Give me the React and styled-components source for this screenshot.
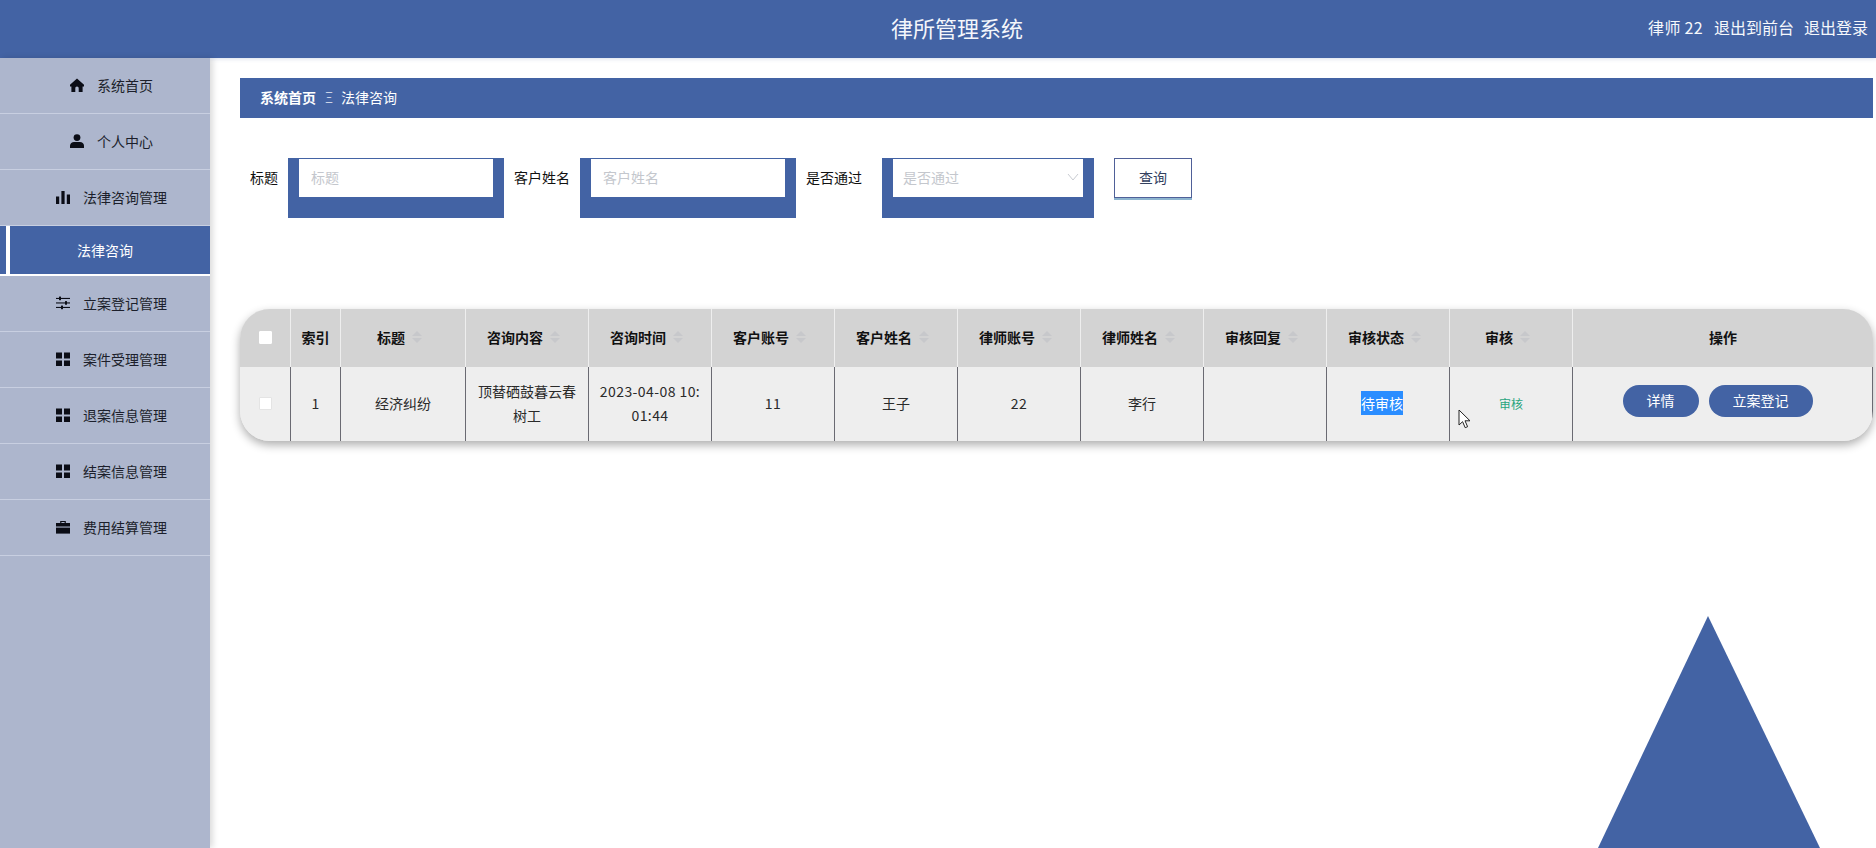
import React from "react";
import styled, { createGlobalStyle } from "styled-components";

const BLUE = "#4363a4";

const Global = createGlobalStyle`
  html, body { margin: 0; padding: 0; background: #fff; }
  body { font-family: "Noto Sans CJK SC", "Open Sans", "Liberation Sans", sans-serif; font-size: 14px; color: #222; }
  * { box-sizing: border-box; }
`;

const Page = styled.div`
  position: relative;
  width: 1876px;
  height: 848px;
  overflow: hidden;
  display: flex;
  flex-direction: column;
`;

const TopBar = styled.header`
  flex: 0 0 58px;
  display: grid;
  grid-template-columns: 1fr auto 1fr;
  align-items: center;
  padding: 0 8px 4px 46px;
  background: ${BLUE};
  color: #fff;
  box-shadow: 0 1px 4px rgba(67, 99, 164, 0.2);
`;

const Title = styled.h1`
  grid-column: 2;
  margin: 0;
  font-size: 22px;
  font-weight: 400;
  line-height: 32px;
  color: #f4f6fb;
`;

const UserLinks = styled.div`
  grid-column: 3;
  justify-self: end;
  display: flex;
  gap: 10px;
  font-size: 16px;
  color: #f6f8fc;
`;

const UserName = styled.span`
  margin-right: 1px;
  letter-spacing: 0.3px;
`;

const Body = styled.div`
  flex: 1;
  display: flex;
  min-height: 0;
`;

const Sidebar = styled.nav`
  flex: 0 0 210px;
  background: #adb6cd;
  box-shadow: 3px 0 6px rgba(0, 0, 0, 0.14);
`;

const NavItem = styled.div`
  height: 56px;
  display: flex;
  align-items: center;
  justify-content: center;
  gap: 13px;
  padding: 0 0 2px 13px;
  border-bottom: 1px solid #c8cfe1;
  color: #1c1f2b;
  svg { width: 14px; height: 14px; fill: #0b0d16; flex: none; }
`;

const ActiveItem = styled.div`
  position: relative;
  height: 50px;
  display: flex;
  align-items: center;
  justify-content: center;
  background: ${BLUE};
  border-bottom: 2px solid #fff;
  color: #fff;
  &::before {
    content: "";
    position: absolute;
    left: 6px;
    top: 0;
    bottom: 0;
    width: 4px;
    background: #fff;
  }
`;

const Main = styled.main`
  flex: 1;
  min-width: 0;
  padding: 20px 3px 0 30px;
`;

const Crumbs = styled.div`
  height: 40px;
  display: flex;
  align-items: center;
  padding: 0 0 2px 20px;
  background: ${BLUE};
  color: #fff;
`;

const CrumbHome = styled.span`
  font-weight: 700;
`;

const CrumbSep = styled.span`
  margin: 0 8px 0 9px;
  font-weight: 300;
  color: #e6eaf4;
`;

const SearchForm = styled.form`
  display: flex;
  align-items: flex-start;
  margin-top: 40px;
  padding-left: 10px;
`;

const FieldLabel = styled.label`
  line-height: 38px;
  color: #111;
  margin-right: ${(p) => p.$gap || 10}px;
`;

const FieldBox = styled.div`
  position: relative;
  width: ${(p) => p.$width}px;
  height: 60px;
  padding: 1px 11px 21px;
  margin-right: 10px;
  background: ${BLUE};
`;

const TextInput = styled.input`
  display: block;
  width: 100%;
  height: 38px;
  padding: 0 12px 2px;
  border: 0;
  outline: 0;
  background: #fff;
  font: inherit;
  &::placeholder { color: #c4c7cd; opacity: 1; }
`;

const SelectInput = styled.select`
  display: block;
  width: 100%;
  height: 38px;
  padding: 0 10px 2px;
  border: 0;
  outline: 0;
  border-radius: 0;
  appearance: none;
  background: #fff;
  color: #c4c7cd;
  font: inherit;
`;

const Chevron = styled.svg`
  position: absolute;
  right: 15px;
  top: 15px;
  width: 12px;
  height: 8px;
  fill: none;
  stroke: #c9ccd2;
  stroke-width: 1;
`;

const QueryButton = styled.button`
  width: 78px;
  height: 40px;
  margin-left: 10px;
  background: #fff;
  border: 1px solid #4f6098;
  box-shadow: 0 2px 0 #8db4cf;
  color: #33415f;
  font: inherit;
  padding: 0 0 2px;
`;

const TableCard = styled.div`
  margin-top: 91px;
  border-radius: 30px;
  overflow: hidden;
  background: #eee;
  box-shadow: 0 4px 10px rgba(0, 0, 0, 0.32);
`;

const Table = styled.table`
  width: 100%;
  table-layout: fixed;
  border-collapse: separate;
  border-spacing: 0;
`;

const HeadCell = styled.th`
  height: 58px;
  padding: 0 10px 2px;
  background: #d3d3d3;
  border-right: 1px solid #eeeeee;
  color: #111;
  font-size: 14px;
  font-weight: 700;
  text-align: center;
  &:last-child { border-right: 0; }
`;

const HeadInner = styled.span`
  display: inline-flex;
  align-items: center;
  justify-content: center;
`;

const SortCaret = styled.span`
  position: relative;
  display: inline-block;
  width: 24px;
  height: 16px;
  flex: none;
  &::before, &::after {
    content: "";
    position: absolute;
    left: 7px;
    border: 5px solid transparent;
  }
  &::before { top: -3px; border-bottom-color: #c7c8cb; }
  &::after { bottom: -3px; border-top-color: #c7c8cb; }
`;

const Cell = styled.td`
  height: 74px;
  padding: 0 10px 2px;
  background: #eee;
  border-right: 1px solid #6a6a72;
  color: #2a2a2a;
  font-size: 14px;
  line-height: 24px;
  text-align: center;
  word-break: break-all;
`;

const NumberText = styled.span`
  letter-spacing: 0.42px;
`;

const CheckBox = styled.input.attrs({ type: "checkbox" })`
  display: block;
  appearance: none;
  width: 13px;
  height: 13px;
  margin: 0 auto;
  background: #fff;
  border: 1px solid ${(p) => (p.$head ? "#fff" : "#e4e4e4")};
  border-radius: 1px;
`;

const Highlight = styled.span`
  display: inline-block;
  margin-right: 12px;
  line-height: 24px;
  background: #2a8dff;
  color: #fff;
  word-break: keep-all;
`;

const ReviewLink = styled.span`
  font-size: 12px;
  color: #2aa57f;
`;

const ActionRow = styled.div`
  display: flex;
  justify-content: center;
  gap: 10px;
  padding: 0 10px 4px 0;
`;

const PillButton = styled.button`
  height: 32px;
  width: ${(p) => p.$width}px;
  padding: 0 0 2px;
  border: 0;
  border-radius: 16px;
  background: ${BLUE};
  color: #fff;
  font: inherit;
  font-size: 14px;
`;

const Pointer = styled.svg`
  position: absolute;
  left: 1458px;
  top: 409px;
  width: 13px;
  height: 20px;
`;

const Triangle = styled.svg`
  position: absolute;
  left: 1598px;
  top: 616px;
  width: 222px;
  height: 232px;
  fill: ${BLUE};
`;

const icons = {
  home: <path d="M7 .6 0 6.8V8.4h1.4V14h3.9V10.4C5.3 9.3 6 8.6 7 8.6s1.7.7 1.7 1.8V14h3.9V8.4H14V6.8z" />,
  user: (
    <>
      <circle cx="7" cy="3.6" r="3.4" />
      <path d="M0 14v-2.4C0 9.6 2 8 4 8h6c2 0 4 1.6 4 3.6V14z" />
    </>
  ),
  chart: (
    <>
      <rect x="0" y="6.5" width="3.2" height="7.5" />
      <rect x="5.4" y="1" width="3.2" height="13" />
      <rect x="10.8" y="4.5" width="3.2" height="9.5" />
    </>
  ),
  sliders: (
    <>
      <rect x="0" y="1.9" width="14" height="1.1" />
      <rect x="0" y="6.4" width="14" height="1.1" />
      <rect x="0" y="10.9" width="14" height="1.1" />
      <rect x="3" y="0.6" width="2" height="3.6" />
      <rect x="9" y="5.1" width="2" height="3.6" />
      <rect x="5" y="9.6" width="2" height="3.6" />
    </>
  ),
  grid: (
    <>
      <rect x="0" y="0.5" width="6" height="6" />
      <rect x="8" y="0.5" width="6" height="6" />
      <rect x="0" y="8.5" width="6" height="6" />
      <rect x="8" y="8.5" width="6" height="6" />
    </>
  ),
  case: (
    <>
      <path d="M4.2 3V1h5.6v2H14v3.6H0V3zM5.4 3h3.2V2.1H5.4z" fillRule="evenodd" />
      <rect x="0" y="7.6" width="14" height="6" />
    </>
  ),
};

const navTop = [
  { icon: "home", label: "系统首页" },
  { icon: "user", label: "个人中心" },
  { icon: "chart", label: "法律咨询管理" },
];
const navBottom = [
  { icon: "sliders", label: "立案登记管理" },
  { icon: "grid", label: "案件受理管理" },
  { icon: "grid", label: "退案信息管理" },
  { icon: "grid", label: "结案信息管理" },
  { icon: "case", label: "费用结算管理" },
];

const columns = [
  { w: 51, key: "check" },
  { w: 50, title: "索引" },
  { w: 125, title: "标题", sort: true },
  { w: 123, title: "咨询内容", sort: true },
  { w: 123, title: "咨询时间", sort: true },
  { w: 123, title: "客户账号", sort: true },
  { w: 123, title: "客户姓名", sort: true },
  { w: 123, title: "律师账号", sort: true },
  { w: 123, title: "律师姓名", sort: true },
  { w: 123, title: "审核回复", sort: true },
  { w: 123, title: "审核状态", sort: true },
  { w: 123, title: "审核", sort: true },
  { w: 300, title: "操作" },
];

const plainCells = [
  { text: "1", num: true },
  { text: "经济纠纷" },
  { text: "顶替硒鼓暮云春树工" },
  { text: "2023-04-08 10:01:44", num: true },
  { text: "11", num: true },
  { text: "王子" },
  { text: "22", num: true },
  { text: "李行" },
  { text: "" },
];

function Nav({ item }) {
  return (
    <NavItem>
      <svg viewBox="0 0 14 14">{icons[item.icon]}</svg>
      <span>{item.label}</span>
    </NavItem>
  );
}

export default function App() {
  return (
    <Page>
      <Global />
      <TopBar>
        <Title>律所管理系统</Title>
        <UserLinks>
          <UserName>律师 22</UserName>
          <span>退出到前台</span>
          <span>退出登录</span>
        </UserLinks>
      </TopBar>
      <Body>
        <Sidebar>
          {navTop.map((n) => (
            <Nav key={n.label} item={n} />
          ))}
          <ActiveItem>法律咨询</ActiveItem>
          {navBottom.map((n) => (
            <Nav key={n.label} item={n} />
          ))}
        </Sidebar>
        <Main>
          <Crumbs>
            <CrumbHome>系统首页</CrumbHome>
            <CrumbSep>Ξ</CrumbSep>
            <span>法律咨询</span>
          </Crumbs>
          <SearchForm>
            <FieldLabel>标题</FieldLabel>
            <FieldBox $width={216}>
              <TextInput placeholder="标题" />
            </FieldBox>
            <FieldLabel>客户姓名</FieldLabel>
            <FieldBox $width={216}>
              <TextInput placeholder="客户姓名" />
            </FieldBox>
            <FieldLabel $gap={20}>是否通过</FieldLabel>
            <FieldBox $width={212}>
              <SelectInput defaultValue="">
                <option value="">是否通过</option>
              </SelectInput>
              <Chevron viewBox="0 0 12 8">
                <path d="M1 1l5 6 5-6" />
              </Chevron>
            </FieldBox>
            <QueryButton type="button">查询</QueryButton>
          </SearchForm>
          <TableCard>
            <Table>
              <colgroup>
                {columns.map((c, i) => (
                  <col key={i} style={{ width: c.w }} />
                ))}
              </colgroup>
              <thead>
                <tr>
                  {columns.map((c, i) => (
                    <HeadCell key={i}>
                      {c.key === "check" ? (
                        <CheckBox $head />
                      ) : (
                        <HeadInner>
                          {c.title}
                          {c.sort && <SortCaret />}
                        </HeadInner>
                      )}
                    </HeadCell>
                  ))}
                </tr>
              </thead>
              <tbody>
                <tr>
                  <Cell>
                    <CheckBox />
                  </Cell>
                  {plainCells.map((c, i) => (
                    <Cell key={i}>{c.num ? <NumberText>{c.text}</NumberText> : c.text}</Cell>
                  ))}
                  <Cell>
                    <Highlight>待审核</Highlight>
                  </Cell>
                  <Cell>
                    <ReviewLink>审核</ReviewLink>
                  </Cell>
                  <Cell>
                    <ActionRow>
                      <PillButton $width={76}>详情</PillButton>
                      <PillButton $width={104}>立案登记</PillButton>
                    </ActionRow>
                  </Cell>
                </tr>
              </tbody>
            </Table>
          </TableCard>
        </Main>
      </Body>
      <Pointer viewBox="0 0 13 20">
        <path d="M1 1v15l3.6-3.3 2.6 6 2.4-1-2.6-5.9H12z" fill="#fff" stroke="#222" strokeWidth="1" />
      </Pointer>
      <Triangle viewBox="0 0 222 232">
        <polygon points="110,0 222,232 0,232" />
      </Triangle>
    </Page>
  );
}
